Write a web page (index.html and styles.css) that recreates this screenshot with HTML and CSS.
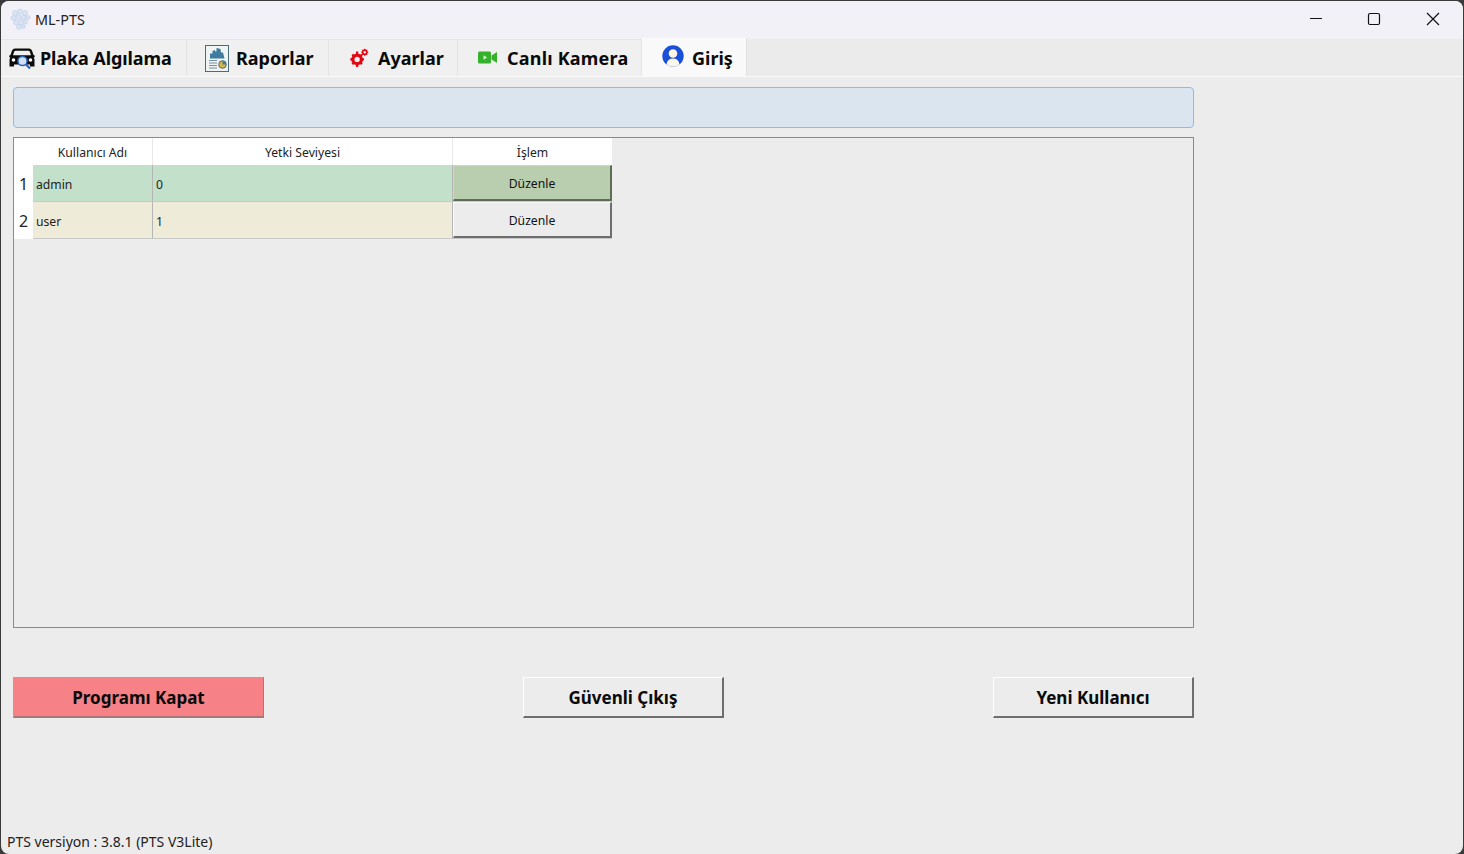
FILE: index.html
```html
<!DOCTYPE html>
<html lang="tr">
<head>
    <meta charset="UTF-8">
    <title>ML-PTS</title>
    <link rel="stylesheet" href="styles.css">
</head>
<body>

<div class="window">
    <div class="titlebar">
        <svg class="app-icon" viewBox="0 0 22 22">
            <g fill="#dbe4f3" stroke="#bccfe8" stroke-width="0.7">
                <circle cx="6" cy="5" r="2.4"/><circle cx="11" cy="3.5" r="2.4"/><circle cx="16" cy="5" r="2.4"/>
                <circle cx="4.5" cy="10" r="2.4"/><circle cx="9.5" cy="9" r="2.4"/><circle cx="14.5" cy="9.5" r="2.4"/><circle cx="19" cy="9.5" r="2"/>
                <circle cx="7" cy="14.5" r="2.4"/><circle cx="12" cy="14.5" r="2.4"/><circle cx="16.5" cy="14" r="2"/>
                <circle cx="10" cy="19" r="2.4"/><circle cx="14.5" cy="18.5" r="1.8"/>
            </g>
        </svg>
        <span class="app-name">ML-PTS</span>
        <div class="win-btns">
            <svg class="win-btn" viewBox="0 0 58 38"><path d="M23 17.500h12" stroke="#111" stroke-width="1.2" fill="none"/></svg>
            <svg class="win-btn" viewBox="0 0 58 38"><rect x="23.500" y="12.500" width="11" height="11" rx="1.500" stroke="#111" stroke-width="1.2" fill="none"/></svg>
            <svg class="win-btn" viewBox="0 0 58 38"><path d="M23 12l12 12M35 12l-12 12" stroke="#111" stroke-width="1.2" fill="none"/></svg>
        </div>
    </div>

    <div class="tabbar">
        <div class="tab tab-plaka">
            <svg class="tab-icon icon-car" viewBox="0 0 26 26">
                <path d="M6 3.500h14q2 0 3 2l1.500 4.500 1.200.5v1.500l-1 .5q.8 1 .8 2.500v6.500h-4.500v-2h-16v2H.500V15q0-1.500.8-2.500l-1-.5v-1.500l1.200-.5L3 5.500q1-2 3-2zm.5 2.300q-1 0-1.400 1L4 10.300h18l-1.100-3.500q-.4-1-1.400-1z" fill="#0c0c0c"/>
                <circle cx="4.500" cy="15" r="1.800" fill="#fff"/><circle cx="21.500" cy="15" r="1.800" fill="#fff"/>
                <circle cx="13.500" cy="16" r="4.600" fill="#cfe0f5" stroke="#2a62b8" stroke-width="1.500"/>
                <path d="M17 19.500l4 4" stroke="#2a62b8" stroke-width="2.200"/>
            </svg>
            Plaka Algılama
        </div>
        <div class="tab tab-rapor">
            <svg class="tab-icon icon-report" viewBox="0 0 24 27">
                <rect x=".5" y=".5" width="23" height="26" fill="#eef3f3" stroke="#4d6a7a"/>
                <path d="M5 13.500V8.500h2.500V6l2 -1 1 1.500h1V3l4 1 .5 3.500h2l1.500 6z" fill="#3d7c9e"/>
                <path d="M4 15.500h8M4 18h8M4 20.500h8M4 23h8" stroke="#7a8f9b" stroke-width="1.200"/>
                <circle cx="17.500" cy="19.500" r="3.800" fill="#d9b44a" stroke="#4d6a7a"/>
                <path d="M17.500 19.500v-3.800a3.800 3.800 0 0 1 3.800 3.800z" fill="#3d7c9e"/>
            </svg>
            Raporlar
        </div>
        <div class="tab tab-ayar">
            <svg class="tab-icon icon-gear" viewBox="0 0 20 20">
                <circle cx="7.500" cy="12" r="4.500" fill="none" stroke="#e30613" stroke-width="3.400"/>
                <path d="M7.500 3.800v3M7.500 17v3M.300 12h3M11.700 12h3M2.400 6.900l2.100 2.100M10.500 15l2.100 2.100M2.400 17.100L4.500 15M10.500 9l2.100-2.100" stroke="#e30613" stroke-width="2.400"/>
                <circle cx="15.500" cy="4.500" r="2.200" fill="none" stroke="#e30613" stroke-width="1.800"/>
                <path d="M15.500.800v1.200M15.500 7v1.200M11.800 4.500H13M18 4.500h1.200M12.900 1.900l.9.9M17.200 6.200l.9.9M12.900 7.100l.9-.9M17.200 2.800l.9-.9" stroke="#e30613" stroke-width="1.200"/>
            </svg>
            Ayarlar
        </div>
        <div class="tab tab-kamera">
            <svg class="tab-icon icon-cam" viewBox="0 0 19 13">
                <rect x="0" y="0.500" width="13" height="12" rx="1.500" fill="#35b12c"/>
                <path d="M13.500 4.500L19 1v11l-5.500-3.500z" fill="#35b12c"/>
                <path d="M5.500 4.300l3.600 2.200-3.600 2.200z" fill="#d8f3d4"/>
            </svg>
            Canlı Kamera
        </div>
        <div class="tab tab-giris active">
            <svg class="tab-icon icon-user" viewBox="0 0 22 22">
                <circle cx="11" cy="11" r="10.700" fill="#1a4fd8"/>
                <circle cx="11" cy="8.500" r="4.300" fill="#fbf6e6"/>
                <path d="M4.500 19.200q1-5.700 6.500-5.700t6.500 5.700q-3 2.500-6.500 2.500t-6.500-2.500z" fill="#fbf6e6"/>
            </svg>
            Giriş
        </div>
    </div>

    <div class="content">
        <div class="banner"></div>

        <div class="table-frame">
            <div class="grid">
                <div class="hdr corner"></div>
                <div class="hdr">Kullanıcı Adı</div>
                <div class="hdr">Yetki Seviyesi</div>
                <div class="hdr hdr-last">İşlem</div>

                <div class="rownum">1</div>
                <div class="cell green">admin</div>
                <div class="cell green">0</div>
                <div class="cell-btn"><button class="edit-btn edit-green">Düzenle</button></div>

                <div class="rownum">2</div>
                <div class="cell cream">user</div>
                <div class="cell cream">1</div>
                <div class="cell-btn"><button class="edit-btn">Düzenle</button></div>
            </div>
        </div>

        <div class="actions">
            <button class="action-btn btn-kapat">Programı Kapat</button>
            <button class="action-btn btn-cikis">Güvenli Çıkış</button>
            <button class="action-btn btn-yeni">Yeni Kullanıcı</button>
        </div>

        <div class="version">PTS versiyon : 3.8.1 (PTS V3Lite)</div>
    </div>
</div>

</body>
</html>
```

FILE: styles.css
```css
html, body { margin: 0; padding: 0; background: #3a3a3a; overflow: hidden; }
body { font-family: "Noto Sans", sans-serif; color: #111; }
.window { width: 1462px; height: 853px; margin: 1px 1px 0 1px; background: #ececec; border-radius: 8px; overflow: hidden; display: flex; flex-direction: column; }

.titlebar { height: 38px; flex: none; background: #f3f1f8; display: flex; align-items: center; padding-left: 8px; }
.app-icon { width: 22px; height: 22px; margin-top: -2px; }
.app-name { font-size: 14.4px; margin-left: 4px; margin-top: -2px; color: #222; }
.win-btns { margin-left: auto; padding-right: 1px; display: flex; }
.win-btn { width: 58px; height: 38px; display: block; }
.win-btn:last-child { margin-left: 1px; }

.tabbar { height: 38px; flex: none; display: flex; background: #ebebeb; border-bottom: 1px solid #fafafa; box-sizing: border-box; }
.tab { display: flex; align-items: center; height: 37px; box-sizing: border-box; background: #f0f0f0; border-top: 1px solid #e6e6e6; border-right: 1px solid #e4e4e4; font-size: 18px; font-weight: 700; color: #0a0a0a; }
.tab.active { background: #f9f9f9; border-top: 1px solid #f9f9f9; border-right: 1px solid #e0e0e0; margin-top: -1px; height: 38px; }
.tab-plaka { width: 186px; padding-left: 8px; letter-spacing: -0.1px; }
.tab-rapor { width: 142px; padding-left: 18px; }
.tab-ayar { width: 129px; padding-left: 21px; }
.tab-kamera { width: 184px; padding-left: 20px; letter-spacing: 0.2px; }
.tab-giris { width: 105px; padding-left: 20px; }
.tab-icon { flex: none; display: block; }
.icon-car { width: 26px; height: 26px; margin-right: 5px; }
.icon-report { width: 24px; height: 27px; margin-right: 7px; }
.icon-gear { width: 19px; height: 19px; margin-right: 9px; margin-top: -1px; }
.icon-cam { width: 19px; height: 13px; margin-right: 10px; margin-top: -2px; }
.icon-user { width: 22px; height: 22px; margin-right: 8px; margin-top: -4px; }

.content { flex: 1; display: flex; flex-direction: column; padding: 10px 12px 0 12px; min-height: 0; }
.banner { width: 1181px; height: 41px; box-sizing: border-box; background: #dbe5f0; border: 1px solid #8ebce8; border-radius: 4px; flex: none; }

.table-frame { width: 1181px; height: 491px; box-sizing: border-box; margin-top: 9px; border: 1px solid #8a8a8a; flex: none; }
.grid { display: grid; grid-template-columns: 19px 120px 300px 159px; grid-template-rows: 27px 37px 37px; width: 598px; font-size: 12.2px; }
.hdr { background: #fff; border-right: 1px solid #e8e8e8; display: flex; align-items: center; justify-content: center; padding-top: 2px; box-sizing: border-box; color: #222; }
.corner { border-right: none; }
.hdr-last { border-right: none; }
.rownum { background: #fff; display: flex; align-items: center; justify-content: center; font-size: 16px; color: #222; }
.cell { display: flex; align-items: center; padding: 2px 0 0 3px; box-sizing: border-box; border-right: 1px solid #b5b5b5; border-bottom: 1px solid #c8c8c8; color: #222; }
.green { background: #c2e0ca; }
.cream { background: #eeebd9; }
.cell-btn { border-bottom: 1px solid #c8c8c8; }
.edit-btn { width: 159px; height: 100%; display: block; box-sizing: border-box; padding: 2px 0 0 0; background: #ececec; border: none; border-top: 1px solid #fafafa; border-left: 1px solid #fafafa; border-right: 2px solid #6e6e6e; border-bottom: 2px solid #6e6e6e; font-family: "Noto Sans", sans-serif; font-size: 12.2px; color: #111; }
.edit-green { background: #b9ceae; border-top-color: #c9dabf; border-left-color: #c9dabf; border-right-color: #5f6d58; border-bottom-color: #5f6d58; }

.actions { width: 1181px; margin-top: 49px; display: flex; flex: none; }
.action-btn { height: 41px; box-sizing: border-box; padding: 0; font-family: "Noto Sans", sans-serif; font-size: 17px; font-weight: 700; color: #0a0a0a; background: #ececec; border: none; border-top: 1px solid #fff; border-left: 1px solid #fff; border-right: 2px solid #6e6e6e; border-bottom: 2px solid #6e6e6e; }
.btn-kapat { width: 251px; margin-right: 259px; background: #f68186; border-top-color: #f68186; border-left-color: #f68186; border-right: 1px solid #a8777a; border-bottom: 2px solid #a8777a; }
.btn-cikis { width: 201px; }
.btn-yeni { width: 201px; margin-left: auto; }

.version { margin-top: auto; margin-left: -6px; margin-bottom: 3px; font-size: 14px; line-height: 19px; color: #222; }
```
